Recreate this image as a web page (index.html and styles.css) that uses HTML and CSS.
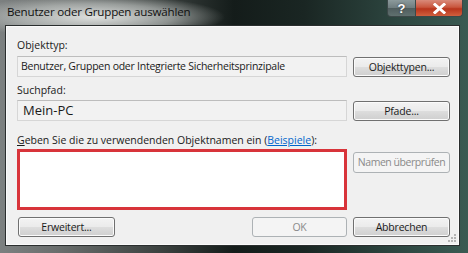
FILE: index.html
```html
<!DOCTYPE html>
<html lang="de">
<head>
<meta charset="utf-8">
<link rel="stylesheet" href="styles.css">
</head>
<body>
<div class="window">
  <div class="titlebar">
    <div class="title">Benutzer oder Gruppen auswählen</div>
    <div class="caption-buttons">
      <div class="cap help">?</div>
      <div class="cap close">
        <svg width="13" height="11" viewBox="0 0 13 11"><path d="M2 1.5 L11 9.5 M11 1.5 L2 9.5" stroke="#fff" stroke-width="3" stroke-linecap="square"/></svg>
      </div>
    </div>
  </div>
  <div class="client">
    <div class="label l1">Objekttyp:</div>
    <div class="row r1">
      <div class="field">Benutzer, Gruppen oder Integrierte Sicherheitsprinzipale</div>
      <div class="btn">Objekttypen...</div>
    </div>
    <div class="label l2">Suchpfad:</div>
    <div class="row r2">
      <div class="field big">Mein-PC</div>
      <div class="btn">Pfade...</div>
    </div>
    <div class="label l3"><u>G</u>eben Sie die zu verwendenden Objektnamen ein (<a class="link">Beispiele</a>):</div>
    <div class="row r3">
      <div class="input"></div>
      <div class="btn disabled check">Namen überprüfen</div>
    </div>
    <div class="row r4">
      <div class="btn">Erweitert...</div>
      <div class="right-btns">
        <div class="btn disabled ok">OK</div>
        <div class="btn">Abbrechen</div>
      </div>
    </div>
    <div class="grip"></div>
  </div>
</div>
</body>
</html>
```
FILE: styles.css
```css
html, body {
  margin: 0;
  padding: 0;
}
body {
  width: 468px;
  height: 253px;
  overflow: hidden;
  font-family: "Open Sans", "Liberation Sans", sans-serif;
  font-size: 10.5px;
}
.window {
  width: 468px;
  height: 253px;
  box-sizing: border-box;
  padding: 0 8px 7px 5px;
  display: flex;
  flex-direction: column;
  background:
    radial-gradient(ellipse 130px 22px at 95px 17px, rgba(230,232,230,0.95), rgba(200,204,202,0.6) 60%, rgba(200,204,202,0) 100%),
    linear-gradient(90deg, #7c8080 0%, #6a6e6d 12%, #3a403e 35%, #141c1a 50%, #1a2623 65%, #2d4640 85%, #3a5a52 100%);
}
.titlebar {
  height: 25px;
  display: flex;
  justify-content: space-between;
  align-items: flex-start;
}
.title {
  font-family: "Open Sans", sans-serif;
  font-size: 11.6px;
  letter-spacing: -0.2px;
  color: #111;
  margin: 4px 0 0 2px;
}
.caption-buttons {
  display: flex;
  margin-right: -3px;
}
.cap {
  height: 17px;
  display: flex;
  align-items: center;
  justify-content: center;
  box-sizing: border-box;
  border: 1px solid #3c4848;
  border-top: none;
}
.help {
  width: 29px;
  border-radius: 0 0 0 4px;
  background: linear-gradient(#8c9a9c 0%, #6e7c7e 50%, #4f5d5e 51%, #60706f 100%);
  color: #fff;
  font-family: "Liberation Sans", sans-serif;
  font-weight: bold;
  font-size: 13px;
  text-shadow: 0 0 2px #222;
}
.close {
  width: 47px;
  border-left: none;
  border-radius: 0 0 4px 0;
  background: linear-gradient(#d98a7a 0%, #c9563e 45%, #b8341c 55%, #d0603e 100%);
}
.client {
  flex: 1;
  position: relative;
  background: #f0f0f0;
  border: 1px solid #2a2e2e;
  box-shadow: inset 0 0 0 1px #fafafa;
  padding: 12px 0 0 11px;
  color: #1a1a1a;
}
.label {
  height: 14px;
  line-height: 14px;
  white-space: nowrap;
}
.row {
  display: flex;
  align-items: flex-start;
}
.r1 { margin-top: 4px; }
.field {
  width: 330px;
  height: 21px;
  box-sizing: border-box;
  border: 1px solid #d6d6d6;
  border-top-color: #bdbdbd;
  background: #f2f2f2;
  padding: 0 0 0 3px;
  line-height: 19px;
  white-space: nowrap;
  letter-spacing: -0.25px;
}
.field.big {
  font-size: 13px;
  letter-spacing: 0;
  padding-left: 5px;
}
.btn {
  width: 97px;
  height: 20px;
  box-sizing: border-box;
  margin-left: 6px;
  margin-top: 1px;
  border: 1px solid #707070;
  border-radius: 3px;
  background: linear-gradient(#f3f3f3 0%, #ebebeb 48%, #dddddd 52%, #cfcfcf 100%);
  box-shadow: inset 0 0 0 1px #fbfbfb;
  text-align: center;
  line-height: 18px;
  color: #1a1a1a;
  white-space: nowrap;
  letter-spacing: -0.2px;
}
.btn.disabled {
  border-color: #adb2b5;
  background: #f4f4f4;
  box-shadow: none;
  color: #8a8a8a;
}
.btn.check {
  letter-spacing: -0.45px;
}
.l2 { margin-top: 6px; }
.r2 { margin-top: 3px; }
.l3 { margin-top: 12px; }
.link {
  color: #0066cc;
  text-decoration: underline;
}
.r3 { margin-top: 2px; }
.input {
  width: 330px;
  height: 61px;
  box-sizing: border-box;
  border: 3px solid #d8343a;
  background: #fff;
}
.r3 .btn { margin-top: 3px; height: 21px; line-height: 19px; }
.r4 {
  margin-top: 7px;
  justify-content: space-between;
  width: 433px;
}
.r4 > .btn { margin-left: 1px; margin-top: 0; }
.right-btns { display: flex; }
.right-btns .btn { margin-top: 0; }
.ok { width: 95px; }
.grip {
  position: absolute;
  right: 2px;
  bottom: 2px;
  width: 9px;
  height: 9px;
  background:
    radial-gradient(circle at 7px 7px, #b4b4b4 1px, transparent 1.2px),
    radial-gradient(circle at 4px 7px, #b4b4b4 1px, transparent 1.2px),
    radial-gradient(circle at 1px 7px, #b4b4b4 1px, transparent 1.2px),
    radial-gradient(circle at 7px 4px, #b4b4b4 1px, transparent 1.2px),
    radial-gradient(circle at 4px 4px, #b4b4b4 1px, transparent 1.2px),
    radial-gradient(circle at 7px 1px, #b4b4b4 1px, transparent 1.2px);
}
```
